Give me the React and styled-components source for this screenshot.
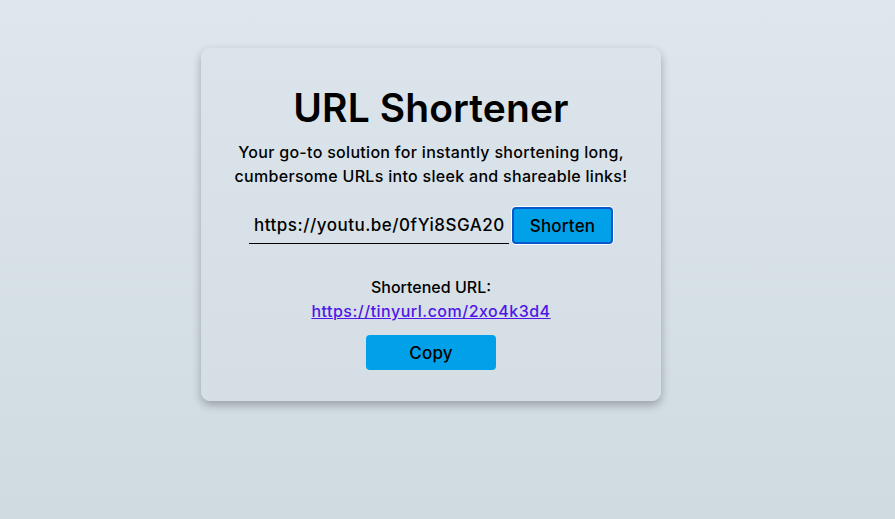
import React, { useState } from 'react'
import styled, { createGlobalStyle } from 'styled-components'

const GlobalStyle = createGlobalStyle`
    html, body {
        margin: 0;
        padding: 0;
        height: 100%;
    }
    body {
        font-family: Inter, "Noto Sans", sans-serif;
        background: linear-gradient(180deg, #dee7ed 0%, #d0dae1 100%);
        min-height: 519px;
    }
`

export default function App() {
    const [url, setUrl] = useState('https://youtu.be/0fYi8SGA20I')
    const shortUrl = 'https://tinyurl.com/2xo4k3d4'

    return (
        <Page>
            <GlobalStyle />
            <Card>
                <Title>URL Shortener</Title>
                <Subtitle>
                    Your go-to solution for instantly shortening long,<br />
                    cumbersome URLs into sleek and shareable links!
                </Subtitle>
                <Form onSubmit={(e) => e.preventDefault()}>
                    <UrlInput value={url} onChange={(e) => setUrl(e.target.value)} />
                    <Button type="submit" focused>Shorten</Button>
                </Form>
                <Label>Shortened URL:</Label>
                <Link href={shortUrl}>{shortUrl}</Link>
                <Button wide>Copy</Button>
            </Card>
        </Page>
    )
}

const Page = styled.div`
    display: flex;
    justify-content: center;
    align-items: flex-start;
    padding: 48px 33px 0 0;
    min-height: 519px;
    box-sizing: border-box;
`

const Card = styled.div`
    width: 460px;
    box-sizing: border-box;
    padding: 35px 20px 31px;
    display: flex;
    flex-direction: column;
    align-items: center;
    background: linear-gradient(180deg, #dbe4ea 0%, #d4dee4 100%);
    border-radius: 9px;
    box-shadow: 0 4px 10px rgba(0, 0, 0, 0.28);
    color: #000;
`

const Title = styled.h1`
    margin: 0;
    font-size: 39px;
    line-height: 50px;
    font-weight: 600;
    letter-spacing: 0.1px;
`

const Subtitle = styled.p`
    margin: 7px 0 0;
    font-size: 16px;
    line-height: 24px;
    font-weight: 500;
    letter-spacing: 0.3px;
    text-align: center;
`

const Form = styled.form`
    margin-top: 19px;
    display: flex;
    align-items: flex-end;
    gap: 3px;
`

const UrlInput = styled.input`
    width: 260px;
    height: 37px;
    box-sizing: border-box;
    padding: 0 5px;
    border: none;
    border-bottom: 1px solid #000;
    background: transparent;
    font-family: Inter, "Noto Sans", sans-serif;
    font-size: 17px;
    font-weight: 500;
    letter-spacing: 0.5px;
    color: #000;
    outline: none;
`

const Button = styled.button`
    width: ${(props) => (props.wide ? '130px' : '101px')};
    height: ${(props) => (props.wide ? '35px' : '37px')};
    margin-top: ${(props) => (props.wide ? '12px' : '0')};
    box-sizing: border-box;
    background: #00a1e9;
    border: ${(props) => (props.focused ? '2px solid #0a58d0' : 'none')};
    box-shadow: ${(props) => (props.focused ? '0 0 0 1px #ffffff' : 'none')};
    border-radius: 4px;
    font-family: Inter, "Noto Sans", sans-serif;
    font-size: 17px;
    font-weight: 500;
    letter-spacing: 0.2px;
    color: #000;
    cursor: pointer;
`

const Label = styled.div`
    margin-top: 31px;
    font-size: 16px;
    line-height: 24px;
    font-weight: 500;
`

const Link = styled.a`
    font-size: 16px;
    line-height: 24px;
    font-weight: 500;
    letter-spacing: 0.5px;
    color: #5016e6;
    text-decoration: underline;
`
